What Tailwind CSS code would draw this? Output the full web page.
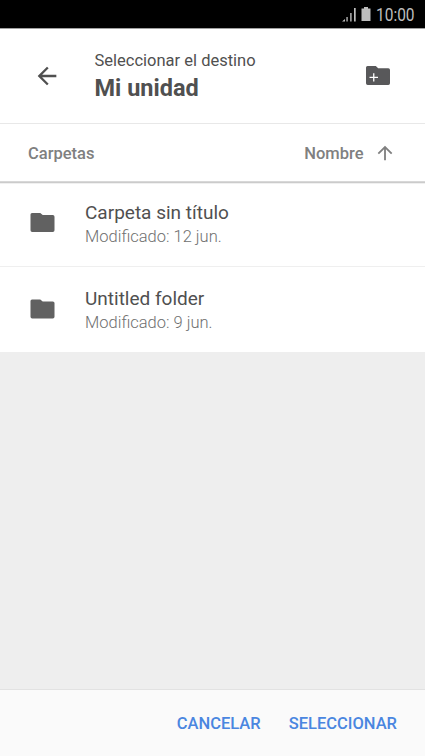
<!DOCTYPE html>
<html lang="es">
<head>
<meta charset="utf-8">
<title>Seleccionar el destino</title>
<script src="https://cdn.jsdelivr.net/npm/@tailwindcss/browser@4"></script>
</head>
<body class="bg-[#eeeeee]">
<div class="w-[425px] h-[756px] flex flex-col overflow-hidden bg-[#eeeeee] font-[Roboto,sans-serif] text-[#505050] whitespace-nowrap">
  <div class="h-[29px] shrink-0 bg-black border-b border-[#a0a0a0] flex items-center justify-end pr-[10px] text-[#bdbdbd]">
    <svg class="w-[14px] h-[14px] mr-[5px] mt-px" viewBox="0 0 14 14" fill="currentColor"><path d="M0 13.500L3 11v2.500zM4.400 9h1.300v4.500H4.400zM8.200 5h1.400v8.500H8.200zM12 0h1.700v13.500H12z"/></svg>
    <svg class="w-[10px] h-[14px] mr-[5px]" viewBox="0 0 10 14" fill="currentColor"><path d="M3 0h4v1.500h2.500V14H.5V1.500H3z"/></svg>
    <span class="text-[18px] leading-7 w-[39px] pt-px"><span class="inline-block origin-left scale-x-[0.86]">10:00</span></span>
  </div>
  <header class="h-[95px] shrink-0 bg-white border-b border-[#e8e8e8] flex items-center pl-[33px] pr-[35px]">
    <svg class="w-[28px] h-[28px]" viewBox="0 0 24 24" fill="#505050"><path d="M20 11H7.830l5.590-5.590L12 4l-8 8 8 8 1.410-1.410L7.830 13H20v-2z"/></svg>
    <div class="ml-[33.5px] flex-1 pt-px">
      <div class="text-[16.5px] leading-6">Seleccionar el destino</div>
      <h1 class="text-[23.5px] leading-[31px] font-bold">Mi unidad</h1>
    </div>
    <svg class="w-6 h-[19px] mb-px" viewBox="0 0 24 19" fill="#58585a"><path fill-rule="evenodd" d="M1.500 0h8.300l2.400 2.300H22.300A1.700 1.700 0 0 1 24 4v13.300a1.700 1.700 0 0 1-1.700 1.700H1.700A1.700 1.700 0 0 1 0 17.300V1.500A1.500 1.500 0 0 1 1.500 0zM7.100 7.200h1.300V10.700h3.600V12H8.400v3.600H7.100V12H3.500V10.700h3.600z"/></svg>
  </header>
  <div class="h-[60px] shrink-0 bg-white flex flex-col">
    <div class="flex-1 flex items-center pl-7 pr-[29px] text-[#808080] font-medium text-[16.5px]">
      <span class="flex-1 pt-[3px]">Carpetas</span>
      <span class="pt-[3px]">Nombre</span>
      <svg class="w-[22px] h-[22px] ml-[10.5px]" viewBox="0 0 24 24" fill="#808080"><path d="M4 12l1.410 1.410L11 7.830V20h2V7.830l5.580 5.590L20 12l-8-8-8 8z"/></svg>
    </div>
    <div class="h-px bg-[#d8d8d8]"></div>
    <div class="h-px bg-[#cbcbcb]"></div>
    <div class="h-px bg-[#f0f0f0]"></div>
  </div>
  <div class="h-[83px] shrink-0 bg-white border-b border-[#efefef] flex pl-[30px] pt-[17px]">
    <svg class="w-[25px] h-5 mt-[12px]" viewBox="-0.5 0 25 20" fill="#616161"><path d="M1.500 0h8.300l2.400 2H22.300A1.700 1.700 0 0 1 24 3.700v13.600a1.700 1.700 0 0 1-1.700 1.700H1.700A1.700 1.700 0 0 1 0 17.300V1.500A1.500 1.500 0 0 1 1.500 0z"/></svg>
    <div class="ml-[30px]">
      <div class="text-[19px] leading-6">Carpeta sin título</div>
      <div class="text-[16.5px] leading-6 font-light text-[#707070]">Modificado: 12 jun.</div>
    </div>
  </div>
  <div class="h-[85px] shrink-0 bg-white flex pl-[30px] pt-5">
    <svg class="w-[25px] h-5 mt-[12px]" viewBox="-0.5 -0.4 25 20" fill="#616161"><path d="M1.500 0h8.300l2.400 2H22.300A1.700 1.700 0 0 1 24 3.700v13.600a1.700 1.700 0 0 1-1.700 1.700H1.700A1.700 1.700 0 0 1 0 17.300V1.500A1.500 1.500 0 0 1 1.500 0z"/></svg>
    <div class="ml-[30px]">
      <div class="text-[19px] leading-6">Untitled folder</div>
      <div class="text-[16.5px] leading-6 font-light text-[#707070]">Modificado: 9 jun.</div>
    </div>
  </div>
  <div class="flex-1"></div>
  <footer class="h-[67px] shrink-0 bg-[#fafafa] border-t border-[#e2e2e2] flex items-center justify-end gap-7 pr-7 pt-[3px] text-[#4a86e0] font-medium text-[16.5px]">
    <span>CANCELAR</span>
    <span>SELECCIONAR</span>
  </footer>
</div>
</body>
</html>
